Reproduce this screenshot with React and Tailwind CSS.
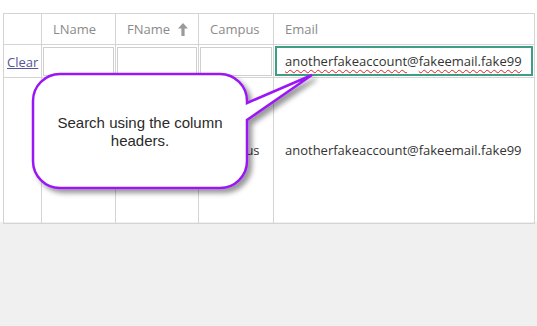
import React from 'react';

const cellBorder = 'border border-[#d4d4d4]';

const SortUp = () => (
  <svg width="10" height="13" viewBox="0 0 10 13" className="inline-block ml-[8px] -mt-[2px] align-middle">
    <path d="M5 0 L10 5.5 H6.6 V13 H3.4 V5.5 H0 Z" fill="#9a9a9a" />
  </svg>
);

const Callout = () => (
  <div className="absolute inset-0 pointer-events-none">
    <svg width="537" height="326" className="absolute left-0 top-0">
      <defs>
        <filter id="shade" x="-20%" y="-20%" width="140%" height="140%">
          <feDropShadow dx="4" dy="4" stdDeviation="2.5" floodColor="#000" floodOpacity="0.4" />
        </filter>
      </defs>
      <path
        d="M60 74 H220 A27 27 0 0 1 247 101 V103 L312 75 L247 120 V161 A27 27 0 0 1 220 188 H60 A27 27 0 0 1 33 161 V101 A27 27 0 0 1 60 74 Z"
        fill="#fff"
        stroke="#9b19f5"
        strokeWidth="2.5"
        strokeLinejoin="miter"
        filter="url(#shade)"
      />
    </svg>
    <div className="absolute left-[33px] top-[75px] w-[214px] h-[114px] flex items-center justify-center text-center text-[15px] leading-[18px] text-[#2a2a2a] font-['Liberation_Sans',Arial,sans-serif]">
      <p>Search using the column<br />headers.</p>
    </div>
  </div>
);

export default function App() {
  const headers = ['LName', 'FName', 'Campus', 'Email'];

  return (
    <div className="relative min-h-[326px] bg-[#f0f0f0] font-['Open_Sans','Noto_Sans',sans-serif] text-[13px]">
      <div className="bg-white h-[222px] pt-[13px] pl-[3px] pr-[2px]">
        <table className="table-fixed border-collapse w-[532px]">
          <colgroup>
            <col className="w-[38px]" />
            <col className="w-[74px]" />
            <col className="w-[83px]" />
            <col className="w-[75px]" />
            <col />
          </colgroup>
          <thead>
            <tr className="h-[31px]">
              <th className={cellBorder}></th>
              {headers.map(h => (
                <th key={h} className={`${cellBorder} text-left font-normal text-[#8a8a8a] pl-[11px] pt-[1px] whitespace-nowrap`}>
                  {h}
                  {h === 'FName' && <SortUp />}
                </th>
              ))}
            </tr>
          </thead>
          <tbody>
            <tr className="h-[32px]">
              <td className={`${cellBorder} pl-[3px] pt-[4px]`}>
                <a href="#" className="underline text-[#55559a]">Clear</a>
              </td>
              {[0, 1, 2].map(i => (
                <td key={i} className={`${cellBorder} px-[1px] py-[1px]`}>
                  <div className="h-[29px] border border-[#cfcfcf]" />
                </td>
              ))}
              <td className={`${cellBorder} px-[1px] py-[1px]`}>
                <div className="h-[30px] border-2 border-[#3b9e85] pl-[8px] pt-[2px] flex items-center text-[#333] whitespace-nowrap">
                  <span className="underline decoration-wavy decoration-[#e02020] decoration-1 underline-offset-[3px]">anotherfakeaccount</span>
                  <span>@</span>
                  <span className="underline decoration-wavy decoration-[#e02020] decoration-1 underline-offset-[3px]">fakeemail.fake99</span>
                </div>
              </td>
            </tr>
            <tr className="h-[146px]">
              <td className={cellBorder}></td>
              <td className={cellBorder}></td>
              <td className={cellBorder}></td>
              <td className={`${cellBorder} pl-[11px] text-[#333]`}>Campus</td>
              <td className={`${cellBorder} pl-[11px] text-[#333] whitespace-nowrap`}>anotherfakeaccount@fakeemail.fake99</td>
            </tr>
          </tbody>
        </table>
      </div>
      <Callout />
    </div>
  );
}
